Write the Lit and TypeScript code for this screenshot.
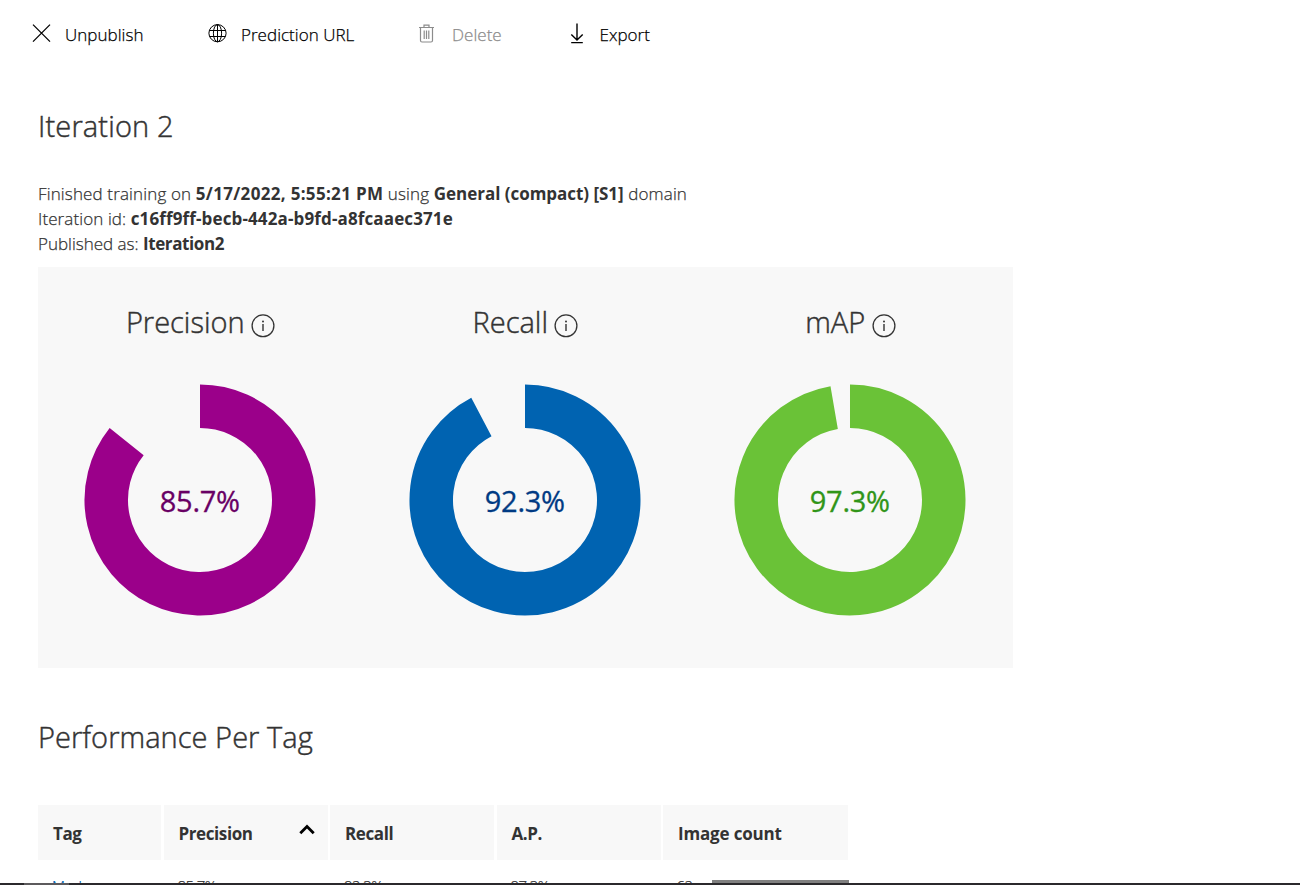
import { LitElement, html, css, svg } from "lit";
import { customElement, property } from "lit/decorators.js";

const icons = {
  close: svg`<path d="M1 .6 18 17.6M18 .6 1 17.6" stroke-width="1.3"/>`,
  globe: svg`<g stroke-width="1"><circle cx="9.5" cy="9.2" r="8.6"/><ellipse cx="9.5" cy="9.2" rx="4.1" ry="8.6"/><path d="M9.5 .6V17.8M1.5 6.5H17.5M1.5 12.5H17.5"/></g>`,
  trash: svg`<g stroke-width="1.2"><path d="M2 3.5H17M7 3.3V1.1H12V3.3M3.5 3.5V16.5Q3.5 18 5 18H14Q15.5 18 15.5 16.5V3.5M7.2 6.5V15M9.5 6.5V15M11.8 6.5V15"/></g>`,
  download: svg`<path d="M10 -.5V15.8M4.3 10.4 10 16.1 15.7 10.4M4.2 18.6H15.8" stroke-width="1.4"/>`,
};

@customElement("tool-button")
export class ToolButton extends LitElement {
  @property() icon: keyof typeof icons = "close";
  @property() label = "";
  @property({ type: Boolean, reflect: true }) disabled = false;
  static styles = css`
    :host { display: flex; align-items: center; gap: 14px; color: #000; white-space: nowrap; }
    :host([disabled]) { color: #8c8c8c; gap: 16px; }
    svg { width: 19px; height: 20px; fill: none; stroke: currentColor; flex: none; overflow: visible; }
    .label { line-height: 24px; padding-top: 2px; letter-spacing: .03px; }
  `;
  render() {
    return html`<svg viewBox="0 0 19 20">${icons[this.icon]}</svg><span class="label">${this.label}</span>`;
  }
}

@customElement("metric-donut")
export class MetricDonut extends LitElement {
  @property() label = "";
  @property({ type: Number }) value = 0;
  @property() tone = "precision";
  static styles = css`
    :host { display: flex; flex-direction: column; align-items: center; }
    .title { display: flex; align-items: center; gap: 6.5px; height: 40px; font-size: 29px; line-height: 38px; -webkit-text-stroke: .45px currentColor; }
    .title span { padding-bottom: 2px; }
    .info { width: 24px; height: 24px; margin-top: 6px; fill: none; stroke: #333; }
    .info .solid { fill: #333; stroke: none; }
    .chart { width: 233px; height: 233px; margin-top: 41px; }
    .ring { fill: none; stroke-width: 43.5; stroke: var(--ring); }
    .value { fill: var(--ink); stroke: var(--ink); stroke-width: .3px; font-size: 29px; font-weight: 400; letter-spacing: -.25px; text-anchor: middle; }
    .precision { --ring: #9b008a; --ink: #690064; }
    .recall { --ring: #0063b1; --ink: #003a83; }
    .map { --ring: #6ac237; --ink: #309518; }
  `;
  render() {
    const r = 93.75;
    const a = (this.value / 100) * Math.PI * 2;
    const x = 116 + r * Math.sin(a);
    const y = 116 - r * Math.cos(a);
    return html`
      <div class="title"><span>${this.label}</span>
        <svg class="info" viewBox="0 0 24 24"><circle cx="12" cy="11.8" r="10.9" stroke-width="1.3"/><path d="M12 10V17" stroke-width="1.4"/><circle class="solid" cx="12" cy="7.4" r="1"/></svg>
      </div>
      <svg class="chart ${this.tone}" viewBox="0 0 233 233">
        <path class="ring" d="M116 ${116 - r}A${r} ${r} 0 1 1 ${x} ${y}"/>
        <text class="value" x="115.8" y="128">${this.value}%</text>
      </svg>`;
  }
}

@customElement("app-root")
export class AppRoot extends LitElement {
  static styles = css`
    :host { display: flex; flex-direction: column; box-sizing: border-box; height: 885px; overflow: hidden; background: #fff; color: #333;
      font-family: "Open Sans", "Noto Sans", sans-serif; font-size: 17px; font-weight: 300; -webkit-text-stroke: .25px currentColor; }
    .page { flex: 1; min-height: 0; overflow: hidden; }
    .toolbar { display: flex; height: 68px; padding-left: 32px; align-items: center; }
    .t1 { width: 176px; } .t2 { width: 209px; } .t3 { width: 149.5px; }
    .content { padding-left: 38px; }
    h1, h2 { margin: 0; font-size: 29px; font-weight: 300; line-height: 40px; letter-spacing: .05px; -webkit-text-stroke: .45px currentColor; }
    h1 { padding-top: 38px; letter-spacing: .15px; }
    .details { margin-top: 35px; line-height: 25px; height: 86px; letter-spacing: .1px; }
    .line { height: 25px; }
    .line:first-child { letter-spacing: .14px; }
    .line:last-child { letter-spacing: 0; }
    b, .th { font-weight: 700; -webkit-text-stroke: 0; }
    .date { letter-spacing: .32px; }
    .domain { letter-spacing: -.03px; }
    .guid { letter-spacing: .13px; }
    .name { letter-spacing: -.4px; }
    .metrics { display: grid; grid-template-columns: repeat(3, 325px); width: 975px; height: 401px; box-sizing: border-box; padding-top: 36px; background: #f8f8f8; }
    h2 { margin-top: 49px; }
    .table { width: 810px; margin-top: 48px; }
    .row { display: grid; grid-template-columns: 123px 164px 164px 164px 185px; column-gap: 2.5px; }
    .th { display: flex; align-items: center; justify-content: space-between; box-sizing: border-box; height: 55px; padding: 2px 13px 0 15px; background: #f8f8f8; letter-spacing: -.4px; }
    .wide { letter-spacing: -.17px; }
    .sort { width: 16px; height: 11px; fill: none; stroke: #000; stroke-width: 2.8; margin-top: -8px; }
    .td { display: flex; font-size: 15px; letter-spacing: -.5px; line-height: 22px; padding: 15px 0 0 14px; }
    .tag { color: #0063b1; }
    .count { gap: 19px; padding-left: 13.5px; }
    .bar { width: 137px; height: 20px; margin-top: 5px; background: #808080; flex: none; }
    .edge { display: flex; height: 2px; background: #2b292c; padding-left: 24px; flex: none; }
    .thumb { width: 45px; background: #5c5a5c; }
  `;
  render() {
    return html`
      <div class="page">
        <div class="toolbar">
          <tool-button class="t1" icon="close" label="Unpublish"></tool-button>
          <tool-button class="t2" icon="globe" label="Prediction URL"></tool-button>
          <tool-button class="t3" icon="trash" label="Delete" disabled></tool-button>
          <tool-button icon="download" label="Export"></tool-button>
        </div>
        <div class="content">
          <h1>Iteration 2</h1>
          <div class="details">
            <div class="line">Finished training on <b class="date">5/17/2022, 5:55:21 PM</b> using <b class="domain">General (compact) [S1]</b> domain</div>
            <div class="line">Iteration id: <b class="guid">c16ff9ff-becb-442a-b9fd-a8fcaaec371e</b></div>
            <div class="line">Published as: <b class="name">Iteration2</b></div>
          </div>
          <div class="metrics">
            <metric-donut label="Precision" value="85.7" tone="precision"></metric-donut>
            <metric-donut label="Recall" value="92.3" tone="recall"></metric-donut>
            <metric-donut label="mAP" value="97.3" tone="map"></metric-donut>
          </div>
          <h2>Performance Per Tag</h2>
          <div class="table">
            <div class="row">
              <div class="th">Tag</div>
              <div class="th">Precision<svg class="sort" viewBox="0 0 16 11"><path d="M1.3 9.3 8 2.6 14.7 9.3"/></svg></div>
              <div class="th">Recall</div>
              <div class="th">A.P.</div>
              <div class="th wide">Image count</div>
            </div>
            <div class="row">
              <div class="td tag">Mask</div>
              <div class="td">85.7%</div>
              <div class="td">92.3%</div>
              <div class="td">97.3%</div>
              <div class="td count"><span>62</span><div class="bar"></div></div>
            </div>
          </div>
        </div>
      </div>
      <div class="edge"><div class="thumb"></div></div>`;
  }
}
